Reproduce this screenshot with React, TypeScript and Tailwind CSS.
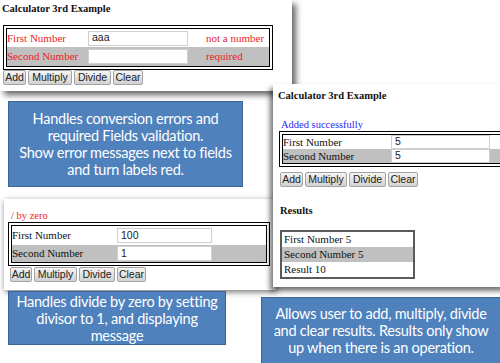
import React from "react";

const serif = { fontFamily: '"Liberation Serif", "Times New Roman", serif' };
const sans = { fontFamily: '"Liberation Sans", Arial, sans-serif' };
const calibri = { fontFamily: 'Lato, "Open Sans", sans-serif' };

function Buttons({ widths }: { widths: number[] }) {
  const labels = ["Add", "Multiply", "Divide", "Clear"];
  return (
    <div className="flex gap-[2px]">
      {labels.map((l, i) => (
        <div
          key={l}
          style={{ ...sans, width: widths[i] }}
          className="h-[15px] flex items-center justify-center text-[10.5px] leading-none text-[#222] border border-[#a3a3a3] rounded-[2px] bg-gradient-to-b from-[#f4f4f4] to-[#d2d2d2]"
        >
          {l}
        </div>
      ))}
    </div>
  );
}

type Row = { label: string; value: string; err?: string; gray?: boolean; red?: boolean; h: number };

function Table({
  rows,
  labelW,
  inputW,
  inputH,
  tail,
  width,
}: {
  rows: Row[];
  labelW: number;
  inputW: number;
  inputH: number;
  tail: number;
  width: number;
}) {
  return (
    <div style={{ width }} className="border-[4px] border-double border-black">
      {rows.map((r, i) => (
        <div
          key={i}
          style={{ height: r.h }}
          className={"flex items-center " + (r.gray ? "bg-[#c0c0c0]" : "bg-white")}
        >
          <div
            style={{ ...serif, width: labelW }}
            className={"text-[11px] leading-none shrink-0 " + (r.red ? "text-[#ee1c25]" : "text-[#111]")}
          >
            {r.label}
          </div>
          <div
            style={{ ...sans, width: inputW, height: inputH }}
            className="ml-[2px] shrink-0 bg-white border border-[#d0d0d0] flex items-center pl-[3px] text-[10.5px] text-[#222]"
          >
            {r.value}
          </div>
          <div style={{ ...serif, width: tail }} className="shrink-0 text-[11px] leading-none text-[#ee1c25] pl-[18px]">
            {r.err ?? ""}
          </div>
        </div>
      ))}
    </div>
  );
}

function BlueBox({ lines, className }: { lines: string[]; className: string }) {
  return (
    <div
      style={calibri}
      className={
        "absolute bg-[#4f81bd] border border-[#3b6597] flex flex-col items-center justify-center text-white text-[14.5px] tracking-[-0.25px] leading-[17px] text-center " +
        className
      }
    >
      {lines.map((l) => (
        <div key={l} className="whitespace-nowrap">
          {l}
        </div>
      ))}
    </div>
  );
}

export default function App() {
  return (
    <div className="relative w-[500px] h-[363px] bg-white overflow-hidden">
      {/* Panel 1 */}
      <div className="absolute left-0 top-0 w-[292px] h-[91px] bg-white shadow-[4px_4px_6px_rgba(0,0,0,0.6)]">
        <div style={serif} className="pl-[2px] pt-[2px] text-[10.5px] leading-[13px] font-bold text-[#111]">
          Calculator 3rd Example
        </div>
        <div className="mt-[10px] ml-[3px]">
          <Table
            width={270}
            labelW={79}
            inputW={100}
            inputH={15}
            tail={79}
            rows={[
              { label: "First Number", value: "aaa", err: "not a number", red: true, h: 18 },
              { label: "Second Number", value: "", err: "required", red: true, gray: true, h: 19 },
            ]}
          />
        </div>
        <div className="ml-[3px]">
          <Buttons widths={[23, 44, 37, 30]} />
        </div>
      </div>

      <BlueBox
        className="left-[8px] top-[101px] w-[235px] h-[86px]"
        lines={[
          "Handles conversion errors and",
          "required Fields validation.",
          "Show error messages next to fields",
          "and turn labels red.",
        ]}
      />

      {/* Panel 3 */}
      <div className="absolute left-[4px] top-[199px] w-[272px] h-[91px] bg-white shadow-[1px_2px_6px_rgba(0,0,0,0.55)]">
        <div style={serif} className="pl-[7px] pt-[10px] text-[10.5px] leading-[13px] text-[#ee1c25]">
          / by zero
        </div>
        <div className="ml-[4px]">
          <Table
            width={262}
            labelW={103}
            inputW={95}
            inputH={15}
            tail={52}
            rows={[
              { label: "First Number", value: "100", h: 19 },
              { label: "Second Number", value: "1", gray: true, h: 17 },
            ]}
          />
        </div>
        <div className="ml-[6px] mt-[1px]">
          <Buttons widths={[22, 43, 36, 29]} />
        </div>
      </div>

      {/* Panel 2 */}
      <div className="absolute left-[273px] top-[84px] w-[240px] h-[203px] bg-white shadow-[-3px_4px_5px_rgba(0,0,0,0.55)]">
        <div style={serif} className="pl-[5px] pt-[5px] text-[10.5px] leading-[13px] font-bold text-[#111]">
          Calculator 3rd Example
        </div>
        <div style={serif} className="pl-[8px] pt-[16px] text-[10.5px] leading-[13px] text-[#2a2af0]">
          Added successfully
        </div>
        <div className="ml-[6px]">
          <Table
            width={240}
            labelW={106}
            inputW={99}
            inputH={14}
            tail={40}
            rows={[
              { label: "First Number", value: "5", h: 14 },
              { label: "Second Number", value: "5", gray: true, h: 14 },
            ]}
          />
        </div>
        <div className="ml-[7px] mt-[5px]">
          <Buttons widths={[23, 42, 37, 30]} />
        </div>
        <div style={serif} className="pl-[7px] pt-[17px] text-[10.5px] leading-[13px] font-bold text-[#111]">
          Results
        </div>
        <div
          style={serif}
          className="ml-[7px] mt-[13px] w-[135px] border-2 border-[#5a5a5a] text-[11px] text-[#111] leading-[15px]"
        >
          <div className="pl-[2px] h-[15px]">First Number 5</div>
          <div className="pl-[2px] h-[15px] bg-[#c0c0c0]">Second Number 5</div>
          <div className="pl-[2px] h-[15px]">Result 10</div>
        </div>
      </div>

      <BlueBox
        className="left-[8px] top-[291px] w-[218px] h-[54px]"
        lines={["Handles divide by zero by setting", "divisor to 1, and displaying", "message"]}
      />
      <BlueBox
        className="left-[261px] top-[297px] w-[240px] h-[67px]"
        lines={[
          "Allows user to add, multiply, divide",
          "and clear results. Results only show",
          "up when there is an operation.",
        ]}
      />
    </div>
  );
}
